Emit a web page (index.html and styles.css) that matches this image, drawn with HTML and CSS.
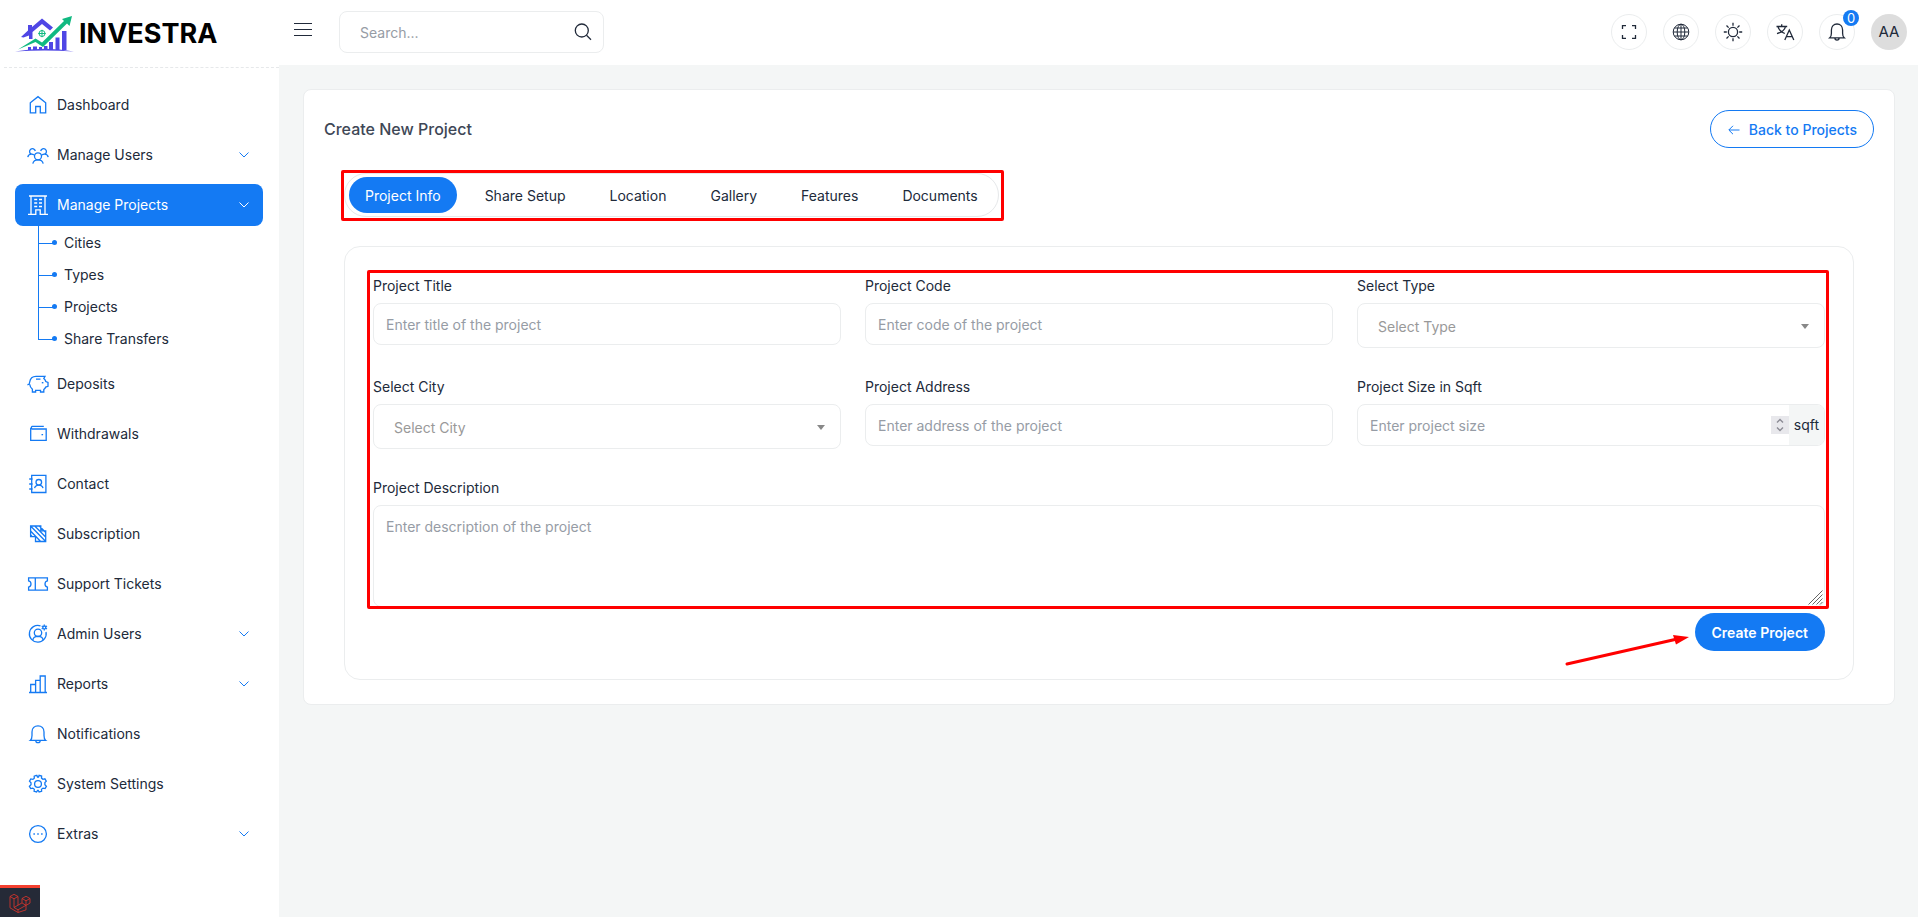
FILE: index.html
```html
<!DOCTYPE html>
<html lang="en">
<head>
<meta charset="utf-8">
<title>Create New Project - Investra</title>
<meta name="viewport" content="width=device-width, initial-scale=1">
<link rel="stylesheet" href="styles.css">
</head>
<body>
<div class="app">
  <aside class="sidebar">
    <a class="brand" href="#">
      <svg class="brand-mark" viewBox="0 0 60 36" aria-hidden="true">
        <g fill="#4f46e5">
          <path d="M6 21 13 14.600V9h4v2l10-8.500L38 11.500l-3 3L27 8l-9.500 8V23H14V19.500L8.500 21.500Z"/>
          <path d="M13 31h3v3h-3zM18 30.500h4V34h-4zM24 31h3v3h-3zM29 30h3.500v4H29zM34 26h4v8h-4zM40.500 21.500h4V34h-4zM47 15h4.500v19H47z"/>
          <path d="M0 35.500Q30 30 59 35.500 30 33.500 0 35.500Z"/>
        </g>
        <g fill="none" stroke="#10b981">
          <circle cx="27" cy="17.500" r="3"/>
          <path d="M27 13.800v7.400M23.300 17.500h7.400"/>
        </g>
        <path fill="#10b981" d="M3 33.500 20.500 22.500l6.500 4L49 5l-2-2L57 0l-2.500 10-2.500-2.500L28 31l-7.500-5Z"/>
      </svg>
      <span class="brand-name">INVESTRA</span>
    </a>
    <nav class="nav" aria-label="Main">
      <a class="nav-item" href="#"><svg class="ico" viewBox="0 0 22 22"><path d="M3.300 18.800V8.800L11 2.700l7.700 6.100v10h-5.400v-6.300H8.700v6.300Z"/></svg>Dashboard</a>
      <a class="nav-item" href="#"><svg class="ico" viewBox="0 0 22 22"><circle cx="11" cy="12.300" r="3.500"/><path d="M5.800 19.600c.5-2.300 2.500-3.800 5.200-3.800s4.700 1.500 5.200 3.800M8.300 7A2.900 2.900 0 1 0 4.200 10.200M13.700 7a2.900 2.900 0 1 1 4.100 3.200M.8 13.200c.3-1.800 1.600-3 3.800-3 .9 0 1.800.3 2.400.8M21.200 13.200c-.3-1.800-1.600-3-3.800-3-.9 0-1.800.3-2.400.8"/></svg>Manage Users<svg class="chev" viewBox="0 0 10 6"><path d="m.5.5 4.500 4.500L9.500.5"/></svg></a>
      <a class="nav-item active" href="#"><svg class="ico" viewBox="0 0 22 22"><path d="M2 2h18M4 2v18M18 2v18M1 20.300h7.800v-4.500h4.400v4.500H21M7.200 5.500h3M12 5.500h3M7.200 9h3M12 9h3M7.200 12.500h3M12 12.500h3"/></svg>Manage Projects<svg class="chev" viewBox="0 0 10 6"><path d="m.5.5 4.500 4.500L9.500.5"/></svg></a>
      <ul class="subnav">
        <li><a href="#">Cities</a></li>
        <li><a href="#">Types</a></li>
        <li><a href="#">Projects</a></li>
        <li><a href="#">Share Transfers</a></li>
      </ul>
      <a class="nav-item" href="#"><svg class="ico" viewBox="0 0 22 22"><path d="M.4 11.500c1.600.3 2-.7 2.300-2.500C3.200 5.500 5.500 3.300 9 3.300h9l-1.200 2.200c1 .8 1.700 1.800 2 3l2.200 1v3.800l-2.300.8c-.5 1-1 1.700-1.900 2.400V19h-3.300v-1.600H8.600V19H5.400v-2.700c-1.600-1.500-2.500-3-2.700-5M9 6.200h4.500"/><path d="M15.600 9v1.400" stroke-width="1.600"/></svg>Deposits</a>
      <a class="nav-item" href="#"><svg class="ico" viewBox="0 0 22 22"><path d="M16.800 3.300H5.200a1.500 1.500 0 0 0 0 2.700h14v11.300H3.700V4.800"/><path d="M15.300 11v1.300" stroke-width="1.600"/></svg>Withdrawals</a>
      <a class="nav-item" href="#"><svg class="ico" viewBox="0 0 22 22"><path d="M4.700 2.300h14.200v17.200H4.700ZM2.200 6h3.500M2.200 11h3.500M2.200 16h3.500"/><circle cx="11.800" cy="9.300" r="2.800"/><path d="M7.600 15.200c.4-2 2-3.100 4.200-3.100s3.800 1.100 4.200 3.100"/></svg>Contact</a>
      <a class="nav-item" href="#"><svg class="ico" viewBox="0 0 22 22"><path d="M3.600 3h10.200v4.800h4.900v10.700H8.500v-4.800H3.600ZM3.800 3.300l14.700 15M8 3.200l10.400 10.600M3.800 8.200 13.400 18.200M12.300 3l6.200 6.200M3.700 12l1.600 1.600"/></svg>Subscription</a>
      <a class="nav-item" href="#"><svg class="ico" viewBox="0 0 22 22"><path d="M1.600 4.800h18.800v3.100a3.200 3.200 0 0 0 0 6.200v3.100H1.600v-3.100a3.200 3.200 0 0 0 0-6.200ZM8.300 4.800v12.400"/></svg>Support Tickets</a>
      <a class="nav-item" href="#"><svg class="ico" viewBox="0 0 22 22"><path d="M13.500 2.800A8.400 8.400 0 1 0 19 9"/><circle cx="11" cy="9.800" r="3.700"/><path d="M5.800 17.200c.3-2.300 2.400-3.800 5.200-3.800s4.900 1.500 5.200 3.800"/><circle cx="17.300" cy="4.500" r="1.500"/><path d="M17.300 1.600v1.200M17.300 6.200v1.200M14.700 3l1.100.6M18.800 5.300l1.200.7M14.700 6l1.100-.7M18.800 3.600l1.200-.6"/></svg>Admin Users<svg class="chev" viewBox="0 0 10 6"><path d="m.5.5 4.500 4.500L9.500.5"/></svg></a>
      <a class="nav-item" href="#"><svg class="ico" viewBox="0 0 22 22"><path d="M2 19.500h18M3.700 19.500v-8h4.900M8.600 19.500V7.300h4.600M13.200 19.500V3h5v16.500"/></svg>Reports<svg class="chev" viewBox="0 0 10 6"><path d="m.5.500 4.500 4.500L9.500.5"/></svg></a>
      <a class="nav-item" href="#"><svg class="ico" viewBox="0 0 22 22"><path d="M3.300 17.400c1.200-1 1.700-2.700 1.700-5V9c0-3.700 2.500-6.200 6-6.200S17 5.300 17 9v3.400c0 2.300.5 4 1.700 5ZM8.800 17.500a2.200 2.200 0 0 0 4.400 0"/></svg>Notifications</a>
      <a class="nav-item" href="#"><svg class="ico" viewBox="0 0 22 22"><circle cx="11" cy="11" r="3.400"/><path d="M9.200 2.400h.7l.6 1.600h1l.6-1.600 2.500.7-.1 2 1.400 1.200 2-.5 1.400 2.300-1.400 1.500v2.200l1.500 1.500-1.300 2.300-2.100-.5-1.500 1.100.1 2.100-2.500.7-.9-1.700H10.600l-1 1.700-2.500-.7.200-2.100-1.500-1.100-2.100.5-1.300-2.300 1.600-1.500V9.800L2.500 8.200l1.300-2.300 2.100.5 1.400-1.200-.1-2.100Z"/></svg>System Settings</a>
      <a class="nav-item" href="#"><svg class="ico" viewBox="0 0 22 22"><circle cx="11" cy="11" r="8.400"/><path d="M6.400 11h1.500M10.250 11h1.500M14.100 11h1.500" stroke-width="1.600"/></svg>Extras<svg class="chev" viewBox="0 0 10 6"><path d="m.5.500 4.500 4.500L9.500.5"/></svg></a>
    </nav>
  </aside>

  <div class="content">
    <header class="topbar">
      <button class="burger" type="button" aria-label="Toggle menu"><svg viewBox="0 0 18 14"><path d="M0 1.500h18M0 7.500h18M0 13.500h18"/></svg></button>
      <form class="search" role="search">
        <input type="search" placeholder="Search..." aria-label="Search">
        <button type="button" aria-label="Submit search"><svg viewBox="0 0 18 18"><circle cx="7.800" cy="7.500" r="6.500"/><path d="m12.500 12.200 4.500 4.500"/></svg></button>
      </form>
      <div class="tools">
        <button class="tool" type="button" aria-label="Full screen"><svg viewBox="0 0 20 20"><path d="M3.500 7V3.700H7M13 3.700h3.500V7M16.500 13v3.300H13M7 16.300H3.500V13"/></svg></button>
        <button class="tool" type="button" aria-label="Visit site"><svg class="fine" viewBox="0 0 20 20"><circle cx="10" cy="10" r="7.800"/><ellipse cx="10" cy="10" rx="3.800" ry="7.800"/><path d="M10 2.200v15.600M2.200 10h15.600M3.500 6h13M3.500 14h13"/></svg></button>
        <button class="tool" type="button" aria-label="Theme"><svg viewBox="0 0 20 20"><circle cx="10" cy="10" r="4.600"/><path d="M10 .8v3M10 16.200v3M.8 10h3M16.200 10h3M3.500 3.500l2.100 2.100M14.400 14.400l2.100 2.100M3.500 16.500l2.100-2.100M14.400 5.600l2.100-2.100"/></svg></button>
        <button class="tool" type="button" aria-label="Language"><svg viewBox="0 0 20 20"><path d="M1.500 4.500h10.700M6.700 2.300v2.200M3 4.700c1 3.300 4 5.700 6.800 6.800M10.500 4.700C9.600 8.500 5.500 10.700 2 11.600M9.800 18l4.500-10 4.500 10M11.300 14.700h6"/></svg></button>
        <button class="tool" type="button" aria-label="Notifications"><svg viewBox="0 0 20 20"><path d="M2.800 15.800c1.200-1 1.600-2.500 1.600-4.600V8c0-3.600 2.300-6 5.600-6s5.600 2.400 5.600 6v3.200c0 2.100.4 3.600 1.600 4.600ZM7.900 16a2.100 2.100 0 0 0 4.200 0"/></svg><span class="badge">0</span></button>
        <button class="avatar" type="button">AA</button>
      </div>
    </header>

    <main class="main">
      <section class="card">
        <div class="card-head">
          <h1>Create New Project</h1>
          <a class="btn btn-outline" href="#"><svg viewBox="0 0 12 10"><path d="M11.500 5H1M5 .8.800 5 5 9.200"/></svg>Back to Projects</a>
        </div>
        <div class="card-body">
          <div class="tabs" role="tablist">
            <button class="tab selected" role="tab" aria-selected="true" type="button">Project Info</button>
            <button class="tab" role="tab" type="button">Share Setup</button>
            <button class="tab" role="tab" type="button">Location</button>
            <button class="tab" role="tab" type="button">Gallery</button>
            <button class="tab" role="tab" type="button">Features</button>
            <button class="tab" role="tab" type="button">Documents</button>
            <span class="mark mark-tabs"></span>
          </div>
          <form class="panel">
            <div class="fields">
              <div class="field"><label for="title">Project Title</label><input class="control" id="title" type="text" placeholder="Enter title of the project"></div>
              <div class="field"><label for="code">Project Code</label><input class="control" id="code" type="text" placeholder="Enter code of the project"></div>
              <div class="field"><label for="type">Select Type</label><div class="select"><select id="type"><option>Select Type</option></select></div></div>
              <div class="field"><label for="city">Select City</label><div class="select"><select id="city"><option>Select City</option></select></div></div>
              <div class="field"><label for="address">Project Address</label><input class="control" id="address" type="text" placeholder="Enter address of the project"></div>
              <div class="field"><label for="size">Project Size in Sqft</label><div class="control group"><input id="size" type="number" placeholder="Enter project size"><svg class="spin" viewBox="0 0 18 18" aria-hidden="true"><path d="m6 6.500 3-3 3 3M6 11.500l3 3 3-3"/></svg><span class="unit">sqft</span></div></div>
              <div class="field wide"><label for="desc">Project Description</label><div class="area-wrap"><textarea class="control area" id="desc" placeholder="Enter description of the project"></textarea><svg class="grip" viewBox="0 0 15 15" aria-hidden="true"><path d="M.5 14.500l14-14M4.500 14.500l10-10M8.500 14.500l6-6M12 14.500l2.500-2.500"/></svg></div></div>
              <span class="mark mark-fields"></span>
            </div>
            <div class="actions">
              <button class="btn btn-primary" type="button">Create Project
                <svg class="arrow" viewBox="0 0 126 34" aria-hidden="true"><path d="M3 30 111 5.500" fill="none" stroke="#f00" stroke-width="3" stroke-linecap="round"/><path d="m109 1 16 2-13 7.500Z" fill="#f00"/></svg>
              </button>
            </div>
          </form>
        </div>
      </section>
    </main>
  </div>
</div>
<button class="debug" type="button" aria-label="Open debug bar"><svg viewBox="0 0 22 20"><path d="m1 3.500 4-2.200 4 2.200v8.700l4-2.300V5.500l4-2.200 4 2.200v4.600l-4 2.300v4.500l-8 2.600-8-4.700ZM1 3.500l4 2.300 4-2.300M5 5.800v8.700l4 2.300 8-4.500M13 5.500l4 2.300 4-2.300M17 7.800v4.600M13 9.900l4 2.500M9 12.200l-4 2.300M9 16.800v2.700"/></svg></button>
</body>
</html>
```
FILE: styles.css
```css
* { box-sizing: border-box; }

body {
  margin: 0;
  background: #f4f6f6;
  color: #212a3a;
  font: 400 14px/22px Inter, "Liberation Sans", sans-serif;
}

a { color: inherit; text-decoration: none; }

button, input, select, textarea { font: inherit; color: inherit; }

button { border: 0; padding: 0; background: none; cursor: pointer; }

svg { display: block; fill: none; stroke: currentColor; }

.app { display: flex; min-height: 100vh; }

/* Sidebar */
.sidebar { flex: 0 0 279px; background: #fff; }

.brand {
  display: flex;
  align-items: center;
  gap: 4px;
  height: 68px;
  margin-left: 4px;
  padding: 2px 0 2px 11px;
  border-bottom: 1px dashed #e6e8ea;
}

.brand-mark { width: 60px; height: 36px; stroke: none; }

.brand-name { color: #000; font-size: 27px; font-weight: 700; line-height: 36px; }

.nav {
  display: flex;
  flex-direction: column;
  gap: 8px;
  padding: 16px 16px 16px 15px;
}

.nav-item {
  display: flex;
  align-items: center;
  gap: 8px;
  height: 42px;
  padding: 0 14px 0 12px;
  border-radius: 8px;
}

.nav-item.active { background: #147af3; color: #fff; }

.ico { width: 22px; height: 22px; color: #147af3; stroke-width: 1.3; }

.active .ico, .active .chev { color: #fff; }

.chev { width: 10px; height: 6px; margin-left: auto; color: #147af3; }

.subnav { margin: -8px 0 0 23px; padding: 1px 0 0; list-style: none; }

.subnav li { position: relative; height: 32px; padding-left: 26px; line-height: 32px; }

.subnav li::before {
  content: "";
  position: absolute;
  left: 0;
  top: -16px;
  width: 14px;
  height: 32px;
  border: solid #147af3;
  border-width: 0 0 1px 1px;
}

.subnav li::after {
  content: "";
  position: absolute;
  left: 14px;
  top: 13px;
  width: 5px;
  height: 5px;
  border-radius: 50%;
  background: #147af3;
}

/* Top bar */
.content { flex: 1; min-width: 0; }

.topbar {
  display: flex;
  align-items: center;
  height: 65px;
  padding: 0 11px 1px 15px;
  background: #fff;
}

.burger { padding-bottom: 6px; margin-right: 27px; }

.burger svg { width: 18px; height: 14px; }

.search {
  display: flex;
  align-items: center;
  width: 265px;
  height: 42px;
  padding: 0 11px 0 20px;
  border: 1px solid #ebedee;
  border-radius: 8px;
}

.search input { flex: 1; min-width: 0; padding: 2px 0 0; border: 0; outline: 0; background: none; }

.search svg { width: 18px; height: 18px; stroke-width: 1.3; }

::placeholder { color: #969ca5; opacity: 1; }

.tools { display: flex; gap: 16px; margin-left: auto; }

.tool, .avatar {
  position: relative;
  display: grid;
  place-items: center;
  width: 36px;
  height: 36px;
  border: 1px solid #ebedee;
  border-radius: 50%;
}

.tool svg { width: 20px; height: 20px; stroke-width: 1.3; }

.tool .fine { stroke-width: 1; }

.avatar { border: 0; background: #ddd; font-size: 15px; }

.badge {
  position: absolute;
  top: -5px;
  right: -5px;
  width: 16px;
  height: 16px;
  border-radius: 50%;
  background: #147af3;
  color: #fff;
  font-size: 13px;
  line-height: 17px;
  text-align: center;
}

/* Page card */
.main { padding: 24px 23px 24px 24px; }

.card {
  padding: 20px 20px 24px;
  border: 1px solid #ebedee;
  border-radius: 8px;
  background: #fff;
}

.card-head { display: flex; justify-content: space-between; align-items: center; }

h1 { margin: 0; color: #3e4756; font-size: 16px; font-weight: 500; line-height: 24px; }

.btn {
  display: flex;
  align-items: center;
  height: 38px;
  padding: 2px 17px 0;
  border-radius: 19px;
  font-weight: 500;
}

.btn-outline { gap: 9px; padding: 1px 16px 0 17px; border: 1px solid #147af3; color: #147af3; }

.btn-outline svg { width: 12px; height: 10px; }

.card-body { padding: 25px 20px 0; }

.tabs {
  position: relative;
  display: flex;
  gap: 12px;
  width: fit-content;
  padding: 3px 4px;
  border: 1px solid #e6e8ea;
  border-radius: 22px;
}

.tab { height: 36px; padding: 2px 16px 0; border-radius: 18px; }

.tab.selected { background: #147af3; color: #fff; }

.panel {
  margin-top: 29px;
  padding: 28px;
  border: 1px solid #ebedee;
  border-radius: 16px;
}

.fields {
  position: relative;
  display: grid;
  grid-template-columns: repeat(3, 1fr);
  gap: 28px 24px;
}

.field { display: flex; flex-direction: column; gap: 6px; min-width: 0; }

.wide { grid-column: 1 / -1; }

.control {
  width: 100%;
  height: 42px;
  padding: 0 12px;
  border: 1px solid #ebedee;
  border-radius: 8px;
  background: #fff;
  outline: 0;
}

.area-wrap { position: relative; }

.area { display: block; height: 102px; padding: 10px 12px; resize: none; }

.grip {
  position: absolute;
  right: 2px;
  bottom: 2px;
  width: 15px;
  height: 15px;
  color: #666;
  pointer-events: none;
}

.select { position: relative; }

.select select {
  display: block;
  width: 100%;
  height: 45px;
  padding: 2px 30px 0 20px;
  border: 1px solid #ebedee;
  border-radius: 8px;
  background: #fff;
  color: #999;
  appearance: none;
}

.select::after {
  content: "";
  position: absolute;
  right: 16px;
  top: 21px;
  border: solid transparent;
  border-width: 5px 4px 0;
  border-top-color: #888;
}

.group { display: flex; align-items: center; padding-right: 0; overflow: hidden; }

.group input { flex: 1; min-width: 0; padding: 2px 0 0; border: 0; outline: 0; background: none; appearance: textfield; }

.group input::-webkit-inner-spin-button { appearance: none; }

.spin { width: 18px; height: 18px; background: #e8e8ec; color: #8b8b94; stroke-width: 1.4; }

.unit { padding: 0 5px; background: #f4f6f6; line-height: 42px; }

.actions { display: flex; justify-content: flex-end; margin-top: 6px; }

.btn-primary { position: relative; background: #147af3; color: #fff; font-weight: 600; }

/* Guide marks */
.mark { position: absolute; border: 3px solid #f00; border-radius: 2px; pointer-events: none; }

.mark-tabs { inset: -4px -6px -5px -4px; }

.mark-fields { inset: -5px -4px -2px -6px; }

.arrow {
  position: absolute;
  right: calc(100% + 5px);
  top: 21px;
  width: 126px;
  height: 34px;
  stroke: none;
}

.debug {
  position: fixed;
  left: 0;
  bottom: 0;
  display: grid;
  place-items: center;
  width: 40px;
  height: 32px;
  border-top: 3px solid #f4402f;
  background: #252a37;
  color: #e0352b;
}

.debug svg { width: 22px; height: 20px; stroke-width: 0.8; }
```
